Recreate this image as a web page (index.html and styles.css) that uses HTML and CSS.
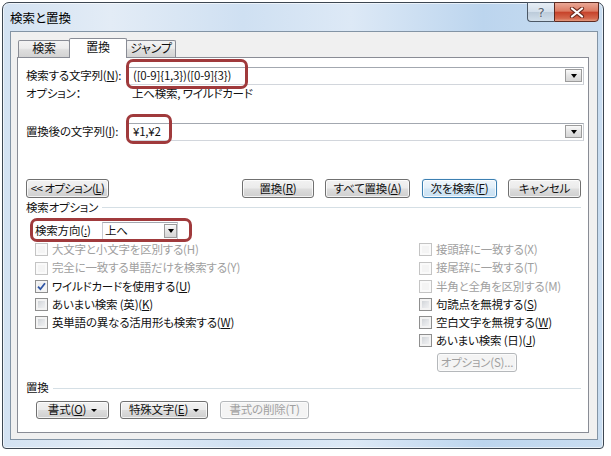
FILE: index.html
```html
<!DOCTYPE html>
<html lang="ja">
<head>
<meta charset="utf-8">
<title>検索と置換</title>
<link rel="stylesheet" href="styles.css">
</head>
<body>
<div class="window">
  <div class="titlebar">
    <div class="title">検索と置換</div>
    <div class="caption">
      <div class="cbtn help">?</div>
      <div class="cbtn close">
        <svg width="16" height="11" viewBox="0 0 16 11"><path d="M3 1.5 L13 9.5 M13 1.5 L3 9.5" stroke="#6e2c1f" stroke-width="4.2" stroke-linecap="round"/><path d="M3 1.5 L13 9.5 M13 1.5 L3 9.5" stroke="#ffffff" stroke-width="2.2" stroke-linecap="round"/></svg>
      </div>
    </div>
  </div>
  <div class="client">
    <div class="tabs">
      <div class="tab t1">検索</div>
      <div class="tab t2 active">置換</div>
      <div class="tab t3">ジャンプ</div>
    </div>
    <div class="panel">
      <div class="row r1">
        <div class="label">検索する文字列(<u>N</u>):</div>
        <div class="combo">
          <div class="val">([0-9]{1,3})([0-9]{3})</div>
          <div class="dd"></div>
          <div class="hl hl1"></div>
        </div>
      </div>
      <div class="row opt">
        <div class="optlabel">オプション：</div>
        <div>上へ検索, ワイルドカード</div>
      </div>
      <div class="row r2">
        <div class="label">置換後の文字列(<u>I</u>):</div>
        <div class="combo">
          <div class="val">¥1,¥2</div>
          <div class="dd"></div>
          <div class="hl hl2"></div>
        </div>
      </div>
      <div class="row btnrow">
        <div class="btn b-opt">&lt;&lt; オプション(<u>L</u>)</div>
        <div class="btn b-rep">置換(<u>R</u>)</div>
        <div class="btn b-all">すべて置換(<u>A</u>)</div>
        <div class="btn b-next default">次を検索(<u>F</u>)</div>
        <div class="btn b-cancel">キャンセル</div>
      </div>
      <div class="heading h1">検索オプション</div>
      <div class="row dir">
        <div class="dirlabel">検索方向(<u>:</u>)</div>
        <div class="combo small">
          <div class="val">上へ</div>
          <div class="dd"></div>
        </div>
        <div class="hl hl3"></div>
      </div>
      <div class="checks">
        <div class="col">
          <div class="cb disabled"><span class="box"></span>大文字と小文字を区別する(H)</div>
          <div class="cb disabled"><span class="box"></span>完全に一致する単語だけを検索する(Y)</div>
          <div class="cb"><span class="box checked"><svg width="9" height="9" viewBox="0 0 9 9"><path d="M1 4.6 L3.4 7.2 L8 1.2" fill="none" stroke="#2f55a4" stroke-width="1.8"/></svg></span>ワイルドカードを使用する(<u>U</u>)</div>
          <div class="cb"><span class="box"></span>あいまい検索 (英)(<u>K</u>)</div>
          <div class="cb"><span class="box"></span>英単語の異なる活用形も検索する(<u>W</u>)</div>
        </div>
        <div class="col">
          <div class="cb disabled"><span class="box"></span>接頭辞に一致する(X)</div>
          <div class="cb disabled"><span class="box"></span>接尾辞に一致する(T)</div>
          <div class="cb disabled"><span class="box"></span>半角と全角を区別する(M)</div>
          <div class="cb"><span class="box"></span>句読点を無視する(<u>S</u>)</div>
          <div class="cb"><span class="box"></span>空白文字を無視する(<u>W</u>)</div>
          <div class="cb"><span class="box"></span>あいまい検索 (日)(<u>J</u>)</div>
          <div class="btn disabled b-sub">オプション(S)...</div>
        </div>
      </div>
      <div class="heading h2">置換</div>
      <div class="row bottom">
        <div class="btn b-fmt">書式(<u>O</u>)<span class="arrow"></span></div>
        <div class="btn b-spec">特殊文字(<u>E</u>)<span class="arrow"></span></div>
        <div class="btn disabled b-del">書式の削除(T)</div>
      </div>
    </div>
  </div>
</div>
</body>
</html>
```

FILE: styles.css
```css
* { box-sizing: border-box; }
html, body { margin: 0; padding: 0; background: #ffffff; }
body {
  font-family: "Noto Sans CJK JP", "Noto Sans", sans-serif;
  font-size: 11.5px;
  letter-spacing: -0.2px;
  line-height: 1;
  color: #111;
  font-feature-settings: "palt";
}
u { text-decoration: underline; text-underline-offset: 1px; }

.window {
  margin: 2px 0 0 2px;
  width: 602px;
  height: 447px;
  border: 1px solid #3d4752;
  border-radius: 7px 7px 4px 4px;
  padding: 0 5px 8px 7px;
  display: flex;
  flex-direction: column;
  background: linear-gradient(to right, #d3e2f2 0%, #e3ecf6 18%, #cfe0f2 40%, #dde9f6 58%, #bcd5ee 80%, #c9ddf1 100%);
  box-shadow: inset 0 0 0 1px rgba(255,255,255,0.6);
}

.titlebar {
  height: 28px;
  display: flex;
  align-items: flex-start;
}
.title {
  padding-top: 9px;
  font-size: 12.5px;
  letter-spacing: 0;
  color: #000;
}
.caption {
  margin-left: auto;
  margin-right: -1px;
  margin-top: -1px;
  display: flex;
}
.cbtn {
  height: 20px;
  display: flex;
  align-items: center;
  justify-content: center;
  border: 1px solid #4c5866;
}
.help {
  width: 27px;
  border-radius: 0 0 0 4px;
  border-right: none;
  background: linear-gradient(#e7eef5 0%, #d3dfeb 48%, #bccbda 52%, #d2dfeb 100%);
  color: #55616e;
  font-family: "DejaVu Sans", sans-serif;
  font-size: 13px;
  text-shadow: 0 0 2px #fff;
}
.close {
  width: 45px;
  border-color: #5e2a20;
  border-radius: 0 0 4px 0;
  background: linear-gradient(#eaa896 0%, #dc7b63 45%, #c7432b 52%, #d4674c 85%, #e39a7f 100%);
}

.client {
  flex: 1;
  border: 1px solid #8394a5;
  background: #f0f0f0;
  padding: 6px 8px 6px 6px;
  display: flex;
  flex-direction: column;
}

.tabs {
  display: flex;
  align-items: flex-end;
  height: 19px;
  padding-left: 1px;
}
.tab {
  height: 17px;
  border: 1px solid #898c95;
  border-bottom: none;
  border-radius: 2px 2px 0 0;
  background: linear-gradient(#f3f3f3 0%, #ececec 45%, #dedede 55%, #d3d3d3 100%);
  display: flex;
  align-items: center;
  justify-content: center;
  padding-bottom: 1px;
  font-size: 12px;
}
.t1 { width: 52px; }
.t2 { width: 58px; margin-left: -1px; }
.t3 { width: 50px; margin-left: -1px; }
.tab.active {
  height: 20px;
  background: #fff;
  margin-bottom: -1px;
  position: relative;
  z-index: 1;
  padding-bottom: 3px;
}

.panel {
  border: 1px solid #898c95;
  background: #fff;
  padding: 0 4px 13px 8px;
  display: flex;
  flex-direction: column;
}

.row { display: flex; align-items: center; }
.r1 { margin-top: 9px; height: 18px; }
.label { width: 102px; flex: none; }
.combo {
  flex: 1;
  height: 18px;
  border: 1px solid #a9aeb6;
  border-color: #a3a8b0 #c9ccd2 #d2d6dc #c9ccd2;
  background: #fff;
  display: flex;
  align-items: center;
  padding-left: 4px;
  position: relative;
}
.combo .val { flex: 1; white-space: nowrap; }
.dd {
  width: 17px;
  height: 13px;
  margin-right: 1px;
  border: 1px solid #9c9c9c;
  background: linear-gradient(#fafafa, #e4e4e4 50%, #d6d6d6);
  display: flex;
  align-items: center;
  justify-content: center;
}
.dd::after {
  content: "";
  border-left: 3.5px solid transparent;
  border-right: 3.5px solid transparent;
  border-top: 4px solid #000;
}

.hl {
  position: absolute;
  border: 3px solid #a03a3c;
  border-radius: 7px;
  pointer-events: none;
}
.hl1 { left: -3px; top: -9px; width: 122px; height: 30px; }
.hl2 { left: -3px; top: -10px; width: 46px; height: 30px; }
.hl3 { left: 4px; top: -4px; width: 162px; height: 24px; }

.opt { height: 18px; }
.optlabel { width: 106px; flex: none; }
.r2 { margin-top: 20px; height: 18px; }

.btn {
  height: 19px;
  border: 1px solid #707070;
  border-radius: 3px;
  background: linear-gradient(#f2f2f2 0%, #ebebeb 48%, #dddddd 52%, #cfcfcf 100%);
  box-shadow: inset 0 0 0 1px rgba(255,255,255,0.75);
  display: flex;
  align-items: center;
  justify-content: center;
  white-space: nowrap;
  flex: none;
}
.btn.default {
  border-color: #3c7fb1;
  background: linear-gradient(#eef6fc 0%, #e2eff9 48%, #d3e7f6 52%, #c9e1f3 100%);
  box-shadow: inset 0 0 0 1px rgba(255,255,255,0.8), 0 0 1px #8ec6ef;
}
.btn.disabled {
  border-color: #b5b8bb;
  background: #f4f4f4;
  color: #a0a0a0;
  box-shadow: inset 0 0 0 1px #fbfbfb;
}

.btnrow { margin-top: 38px; height: 19px; }
.b-opt { width: 83px; letter-spacing: -0.6px; }
.b-rep { width: 72px; margin-left: auto; }
.b-all { width: 85px; margin-left: 11px; }
.b-next { width: 75px; margin-left: 12px; }
.b-cancel { width: 73px; margin-left: 11px; margin-right: 3px; }

.heading {
  display: flex;
  align-items: center;
  height: 18px;
}
.heading::after {
  content: "";
  flex: 1;
  height: 1px;
  background: #d5dfe5;
  margin-left: 4px;
  margin-right: 3px;
}
.h1 { margin-top: 1px; }
.h2 { margin-top: 7px; }

.dir { margin-top: 5px; height: 18px; position: relative; }
.dirlabel { width: 67px; margin-left: 9px; flex: none; }
.combo.small { flex: none; width: 76px; padding-left: 2px; }
.combo.small .dd { width: 13px; height: 14px; margin-right: 0; }

.checks {
  display: grid;
  grid-template-columns: 384px 1fr;
  margin: 1px 0 0 9px;
}
.col { display: flex; flex-direction: column; }
.cb {
  height: 18.2px;
  display: flex;
  align-items: center;
  white-space: nowrap;
}
.box {
  width: 13px;
  height: 13px;
  margin-right: 4px;
  border: 1px solid #8f8f8f;
  background: linear-gradient(135deg, #c6cace 0%, #e2e4e7 50%, #f6f6f6 100%);
  box-shadow: inset 0 0 0 2px #f3f3f3;
  display: flex;
  align-items: center;
  justify-content: center;
  flex: none;
}
.box.checked { background: linear-gradient(135deg, #e4e6e9, #fafafa); }
.cb.disabled { color: #a0a0a0; }
.cb.disabled .box {
  border-color: #c4c4c4;
  background: #f4f4f4;
  box-shadow: inset 0 0 0 2px #fafafa;
}
.b-sub { width: 80px; margin: 3px 0 0 18px; }

.bottom { margin-top: 4px; height: 18px; }
.bottom .btn { height: 18px; }
.b-fmt { width: 73px; margin-left: 10px; }
.b-spec { width: 88px; margin-left: 11px; }
.b-del { width: 89px; margin-left: 12px; }
.arrow {
  margin-left: 5px;
  border-left: 3px solid transparent;
  border-right: 3px solid transparent;
  border-top: 3px solid #000;
}
```
